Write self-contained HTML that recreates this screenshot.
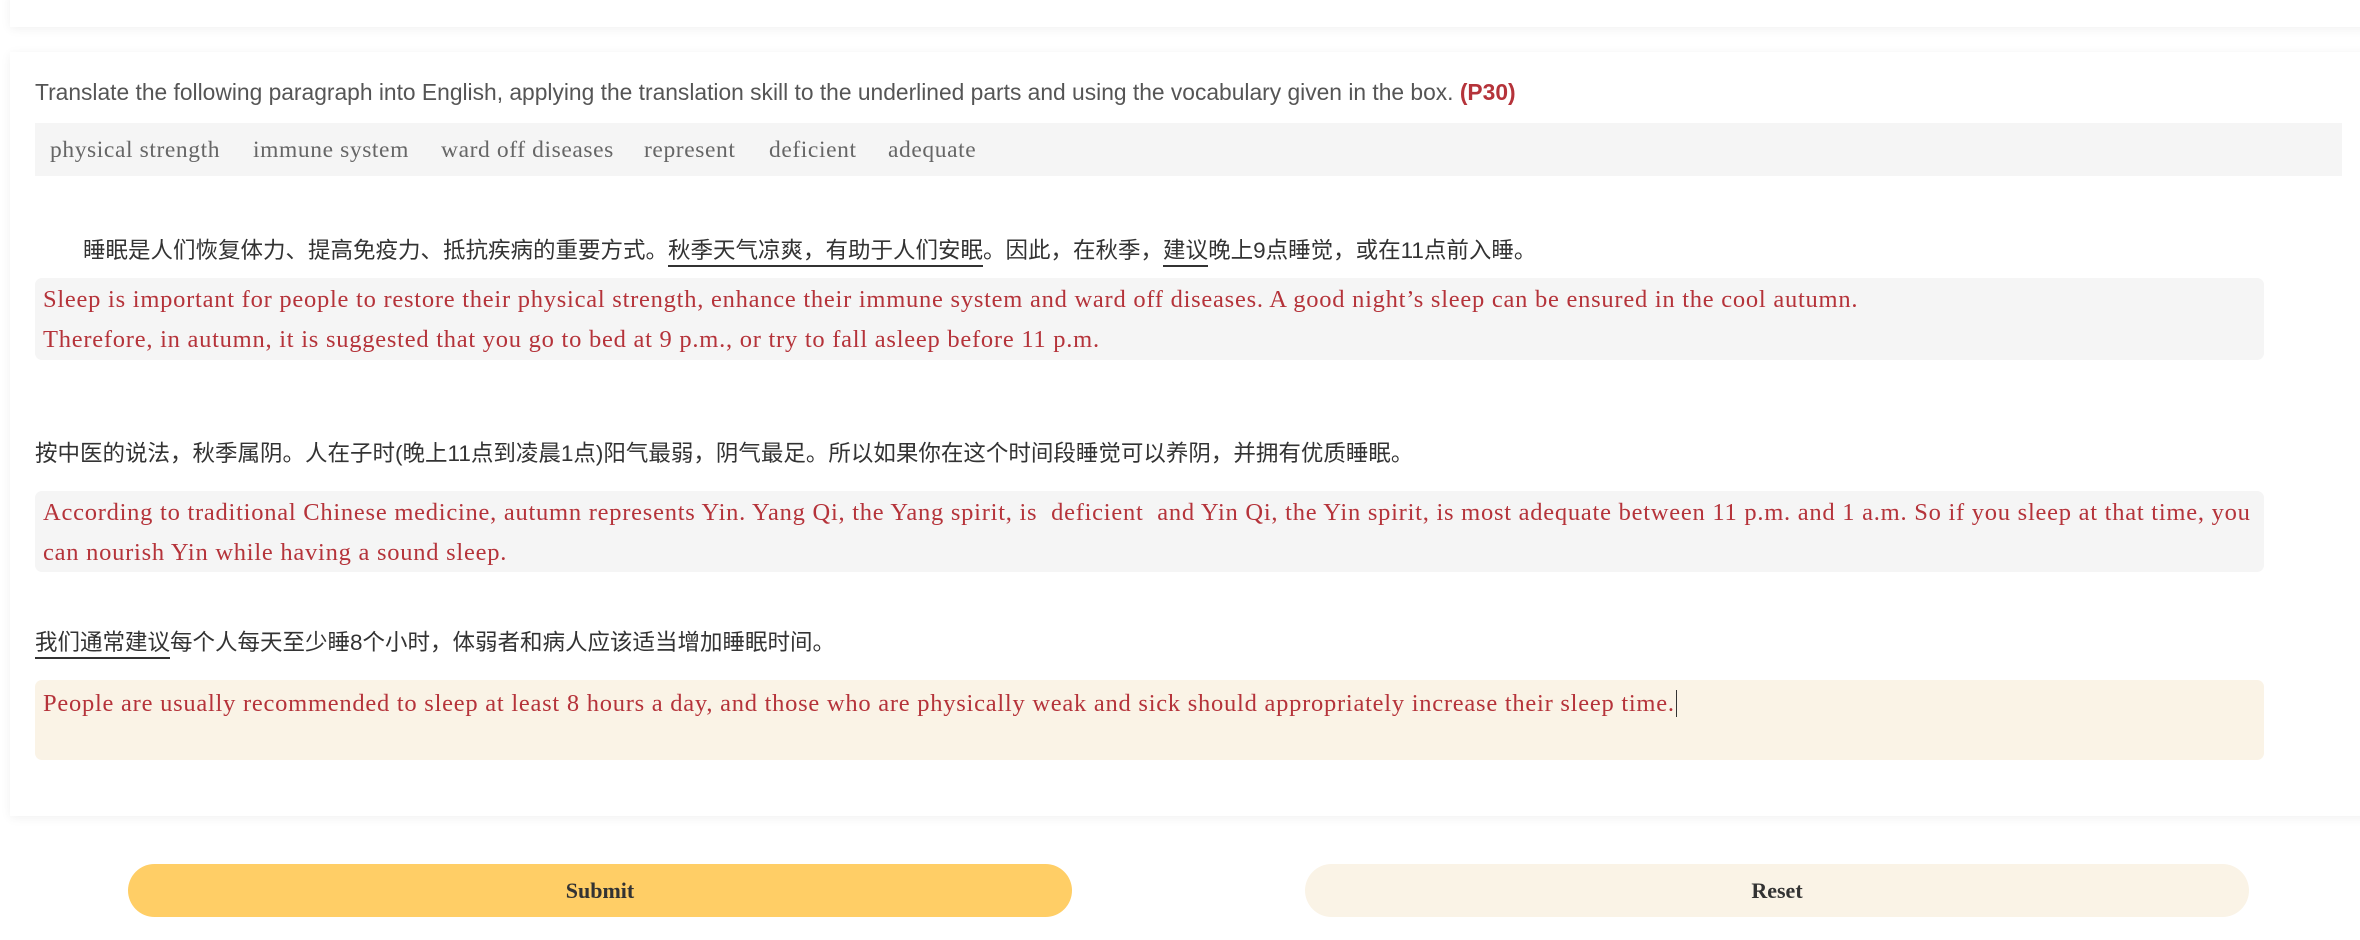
<!DOCTYPE html>
<html><head><meta charset="utf-8"><style>
body{margin:0;width:2360px;height:940px;background:#fff;position:relative;overflow:hidden;font-family:"Liberation Sans","Noto Sans CJK SC",sans-serif}
.card{position:absolute;background:#fff;box-shadow:0 2px 10px rgba(0,0,0,0.06)}
.abs{position:absolute;white-space:nowrap}
.zh{font-size:22.5px;color:#333;font-family:"Liberation Sans","Noto Sans CJK SC",sans-serif}
.zh u{text-decoration:none;border-bottom:2px solid #333;padding-bottom:2px}
.box{position:absolute;left:35px;width:2229px;border-radius:7px;background:#f5f5f5;font-family:"Liberation Serif",serif;color:#b5333a;font-size:24.5px;letter-spacing:0.75px;line-height:40px;padding:2px 8px;box-sizing:border-box}
.btn{position:absolute;top:864px;height:53px;border-radius:27px;font-family:"Liberation Serif",serif;font-weight:bold;font-size:22px;color:#333;text-align:center;line-height:53px}
</style></head><body>
<div class="card" style="left:10px;top:-10px;width:2360px;height:37px"></div>
<div class="card" style="left:10px;top:52px;width:2360px;height:764px"></div>
<div class="abs" style="left:35px;top:79px;font-size:22.8px;color:#555">Translate the following paragraph into English, applying the translation skill to the underlined parts and using the vocabulary given in the box. <b style="color:#b5333a">(P30)</b></div>
<div style="position:absolute;left:35px;top:123px;width:2307px;height:53px;background:#f5f5f5;font-family:'Liberation Serif',serif;font-size:23.5px;letter-spacing:0.6px;color:#666;line-height:55px">
<span class="abs" style="left:15px">physical strength</span><span class="abs" style="left:218px">immune system</span><span class="abs" style="left:406px">ward off diseases</span><span class="abs" style="left:609px">represent</span><span class="abs" style="left:734px">deficient</span><span class="abs" style="left:853px">adequate</span></div>
<div class="abs zh" style="left:83px;top:233px">睡眠是人们恢复体力、提高免疫力、抵抗疾病的重要方式。<u>秋季天气凉爽，有助于人们安眠</u>。因此，在秋季，<u>建议</u>晚上9点睡觉，或在11点前入睡。</div>
<div class="box" style="top:278px;height:82px">Sleep is important for people to restore their physical strength, enhance their immune system and ward off diseases. A good night’s sleep can be ensured in the cool autumn.<br>Therefore, in autumn, it is suggested that you go to bed at 9 p.m., or try to fall asleep before 11 p.m.</div>
<div class="abs zh" style="left:35px;top:436px">按中医的说法，秋季属阴。人在子时(晚上11点到凌晨1点)阳气最弱，阴气最足。所以如果你在这个时间段睡觉可以养阴，并拥有优质睡眠。</div>
<div class="box" style="top:491px;height:81px;padding-right:0">According to traditional Chinese medicine, autumn represents Yin. Yang Qi, the Yang spirit, is &nbsp;deficient &nbsp;and Yin Qi, the Yin spirit, is most adequate between 11 p.m. and 1 a.m. So if you sleep at that time, you can nourish Yin while having a sound sleep.</div>
<div class="abs zh" style="left:35px;top:625px"><u>我们通常建议</u>每个人每天至少睡8个小时，体弱者和病人应该适当增加睡眠时间。</div>
<div class="box" style="top:680px;height:80px;background:#faf3e6;padding-top:4px">People are usually recommended to sleep at least 8 hours a day, and those who are physically weak and sick should appropriately increase their sleep time.<span style="border-left:1.5px solid #333;margin-left:1px"></span></div>
<div class="btn" style="left:128px;width:944px;background:#ffce66">Submit</div>
<div class="btn" style="left:1305px;width:944px;background:#faf3e6">Reset</div>
</body></html>
